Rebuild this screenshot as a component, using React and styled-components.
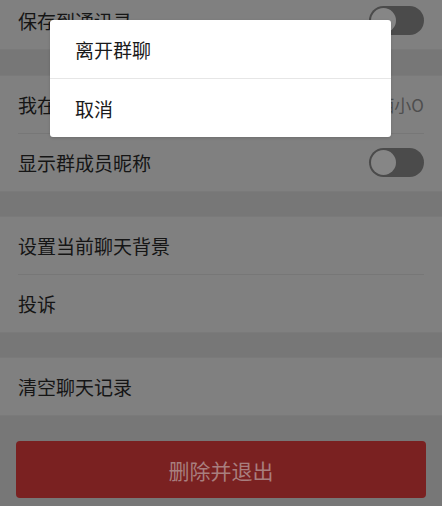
import React from 'react';
import styled, { createGlobalStyle } from 'styled-components';

const GlobalStyle = createGlobalStyle`
    html, body {
        margin: 0;
        padding: 0;
        background: #777777;
        font-family: "Noto Sans CJK SC", "Noto Sans", sans-serif;
    }
`;

const Screen = styled.div`
    position: relative;
    width: 442px;
    height: 506px;
    overflow: hidden;
    background: #777777;
`;

const Scroller = styled.div`
    display: flex;
    flex-direction: column;
    margin-top: -9px;
`;

const Group = styled.div`
    display: flex;
    flex-direction: column;
    background: #808080;
    border-top: 1px solid #7a7a7a;
    border-bottom: 1px solid #7a7a7a;
    margin-top: ${props => props.gap}px;
`;

const Row = styled.div`
    display: flex;
    align-items: center;
    justify-content: space-between;
    height: 57px;
    padding: 0 18px;
`;

const Divider = styled.div`
    height: 1px;
    margin: 0 18px;
    background: #777777;
`;

const Label = styled.span`
    font-size: 19px;
    color: #151515;
    white-space: nowrap;
`;

const Value = styled.span`
    font-size: 17px;
    color: #4e4e4e;
    white-space: nowrap;
`;

const Toggle = styled.div`
    display: flex;
    align-items: center;
    box-sizing: border-box;
    width: 55px;
    height: 29px;
    padding: 2px;
    border-radius: 15px;
    background: #4b4b4b;
`;

const Knob = styled.div`
    width: 25px;
    height: 25px;
    border-radius: 50%;
    background: #868686;
`;

const Footer = styled.div`
    padding: 25px 16px 0;
`;

const DangerButton = styled.div`
    display: flex;
    align-items: center;
    justify-content: center;
    height: 57px;
    border-radius: 4px;
    background: #7a2121;
    color: #a87e7e;
    font-size: 21px;
`;

const Sheet = styled.div`
    position: absolute;
    top: 20px;
    left: 50px;
    width: 341px;
    display: flex;
    flex-direction: column;
    background: #ffffff;
    border-radius: 3px;
    box-shadow: 0 1px 3px rgba(0, 0, 0, 0.15);
`;

const SheetItem = styled.div`
    display: flex;
    align-items: center;
    height: 58px;
    padding-left: 25px;
    font-size: 19px;
    color: #1a1a1a;
    border-top: ${props => props.first ? 'none' : '1px solid #e6e6e6'};
`;

const groups = [
    { gap: 0, rows: [{ label: '保存到通讯录', toggle: true }] },
    {
        gap: 25,
        rows: [
            { label: '我在本群的昵称', value: '西小O' },
            { label: '显示群成员昵称', toggle: true }
        ]
    },
    {
        gap: 24,
        rows: [
            { label: '设置当前聊天背景' },
            { label: '投诉' }
        ]
    },
    { gap: 24, rows: [{ label: '清空聊天记录' }] }
];

const actions = ['离开群聊', '取消'];

const App = () => (
    <Screen>
        <GlobalStyle />
        <Scroller>
            {groups.map((group, gi) => (
                <Group key={gi} gap={group.gap}>
                    {group.rows.map((row, ri) => (
                        <React.Fragment key={row.label}>
                            {ri > 0 && <Divider />}
                            <Row>
                                <Label>{row.label}</Label>
                                {row.value && <Value>{row.value}</Value>}
                                {row.toggle && <Toggle><Knob /></Toggle>}
                            </Row>
                        </React.Fragment>
                    ))}
                </Group>
            ))}
            <Footer>
                <DangerButton>删除并退出</DangerButton>
            </Footer>
        </Scroller>
        <Sheet>
            {actions.map((action, i) => (
                <SheetItem key={action} first={i === 0}>{action}</SheetItem>
            ))}
        </Sheet>
    </Screen>
);

export default App;
